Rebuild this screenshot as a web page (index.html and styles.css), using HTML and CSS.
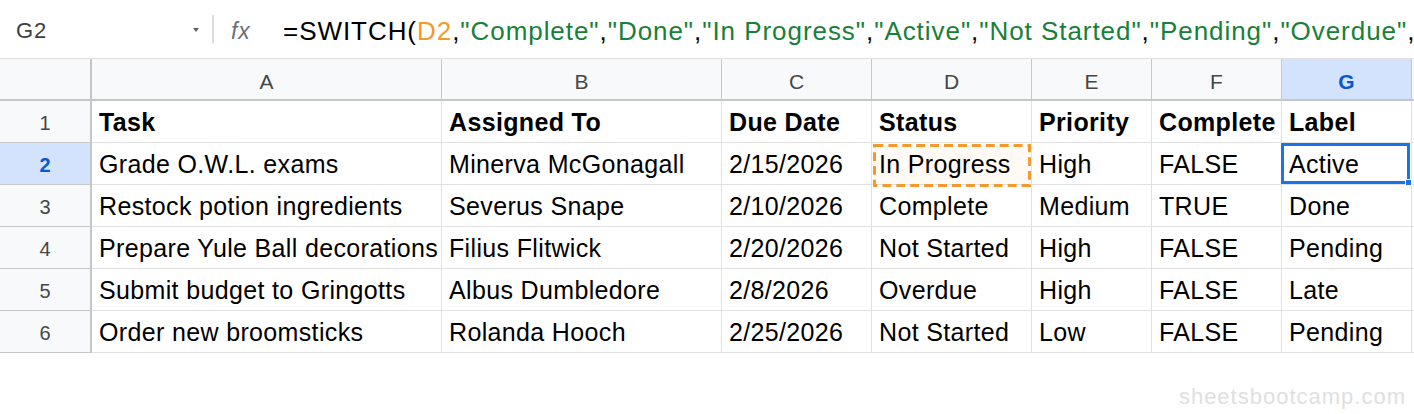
FILE: index.html
```html
<!DOCTYPE html>
<html lang="en">
<head>
<meta charset="utf-8">
<title>Sheet</title>
<link rel="stylesheet" href="styles.css">
</head>
<body>
<div class="app">
  <div class="formula-bar">
    <div class="namebox"><span class="name">G2</span><span class="caret"></span></div>
    <div class="divider"></div>
    <div class="fx">fx</div>
    <div class="formula">=SWITCH(<span class="ref">D2</span>,<span class="str">"Complete"</span>,<span class="str">"Done"</span>,<span class="str">"In Progress"</span>,<span class="str">"Active"</span>,<span class="str">"Not Started"</span>,<span class="str">"Pending"</span>,<span class="str">"Overdue"</span>,</div>
  </div>

  <div class="sheet">
    <div class="corner"></div>
    <div class="colhead">A</div>
    <div class="colhead">B</div>
    <div class="colhead">C</div>
    <div class="colhead">D</div>
    <div class="colhead">E</div>
    <div class="colhead">F</div>
    <div class="colhead active">G</div>
    <div class="colhead last"></div>

    <div class="rowhead">1</div>
    <div class="cell bold">Task</div>
    <div class="cell bold">Assigned To</div>
    <div class="cell bold">Due Date</div>
    <div class="cell bold">Status</div>
    <div class="cell bold">Priority</div>
    <div class="cell bold">Complete</div>
    <div class="cell bold">Label</div>
    <div class="cell"></div>

    <div class="rowhead active">2</div>
    <div class="cell">Grade O.W.L. exams</div>
    <div class="cell">Minerva McGonagall</div>
    <div class="cell">2/15/2026</div>
    <div class="cell copied">In Progress<svg class="dash" viewBox="0 0 160 44" preserveAspectRatio="none"><rect x="1.5" y="1.5" width="156" height="41" fill="none" stroke="#f29a2e" stroke-width="3" stroke-dasharray="9 5"/></svg></div>
    <div class="cell">High</div>
    <div class="cell">FALSE</div>
    <div class="cell selected">Active<span class="handle"></span></div>
    <div class="cell"></div>

    <div class="rowhead">3</div>
    <div class="cell">Restock potion ingredients</div>
    <div class="cell">Severus Snape</div>
    <div class="cell">2/10/2026</div>
    <div class="cell">Complete</div>
    <div class="cell">Medium</div>
    <div class="cell">TRUE</div>
    <div class="cell">Done</div>
    <div class="cell"></div>

    <div class="rowhead">4</div>
    <div class="cell">Prepare Yule Ball decorations</div>
    <div class="cell">Filius Flitwick</div>
    <div class="cell">2/20/2026</div>
    <div class="cell">Not Started</div>
    <div class="cell">High</div>
    <div class="cell">FALSE</div>
    <div class="cell">Pending</div>
    <div class="cell"></div>

    <div class="rowhead">5</div>
    <div class="cell">Submit budget to Gringotts</div>
    <div class="cell">Albus Dumbledore</div>
    <div class="cell">2/8/2026</div>
    <div class="cell">Overdue</div>
    <div class="cell">High</div>
    <div class="cell">FALSE</div>
    <div class="cell">Late</div>
    <div class="cell"></div>

    <div class="rowhead">6</div>
    <div class="cell">Order new broomsticks</div>
    <div class="cell">Rolanda Hooch</div>
    <div class="cell">2/25/2026</div>
    <div class="cell">Not Started</div>
    <div class="cell">Low</div>
    <div class="cell">FALSE</div>
    <div class="cell">Pending</div>
    <div class="cell"></div>
  </div>

  <div class="watermark">sheetsbootcamp.com</div>
</div>
</body>
</html>
```

FILE: styles.css
```css
* { box-sizing: border-box; }

html, body {
  margin: 0;
  padding: 0;
  background: #ffffff;
  overflow: hidden;
}

.app {
  width: 1414px;
  height: 414px;
  font-family: "Liberation Sans", Arial, sans-serif;
  color: #000;
}

/* ---------- formula bar ---------- */
.formula-bar {
  height: 59px;
  display: flex;
  align-items: center;
  padding-top: 4px;
  border-bottom: 1px solid #e1e1e1;
  white-space: nowrap;
  overflow: hidden;
}

.namebox {
  width: 212px;
  flex: none;
  display: flex;
  align-items: center;
  justify-content: space-between;
  padding: 0 13px 0 16px;
}

.name {
  font-size: 22px;
  letter-spacing: 1px;
  color: #3c4043;
}

.caret {
  width: 0;
  height: 0;
  border-left: 3px solid transparent;
  border-right: 3px solid transparent;
  border-top: 4px solid #5f6368;
  margin-top: -3px;
}

.divider {
  width: 2px;
  height: 28px;
  flex: none;
  margin-top: -4px;
  background: #dadce0;
}

.fx {
  width: 52px;
  flex: none;
  margin-left: 17px;
  font-size: 23px;
  font-style: italic;
  letter-spacing: 0.8px;
  color: #6b6f73;
}

.formula {
  font-size: 26px;
  letter-spacing: 0.95px;
  color: #000;
}

.formula .ref { color: #f29a2e; }
.formula .str { color: #188038; }

/* ---------- grid ---------- */
.sheet {
  display: grid;
  grid-template-columns: 92px 350px 280px 150px 160px 120px 130px 130px 1fr;
  grid-auto-rows: 42px;
}

.corner,
.colhead,
.rowhead {
  background: #f8f9fa;
  color: #444746;
  text-align: center;
}

.corner {
  border-right: 2px solid #c4c7c5;
  border-bottom: 2px solid #c4c7c5;
}

.colhead {
  border-right: 1px solid #c7c7c7;
  border-bottom: 2px solid #c4c7c5;
  padding-top: 5px;
  line-height: 35px;
  font-size: 21px;
}

.colhead.last { border-right: none; }

.rowhead {
  border-right: 2px solid #c4c7c5;
  border-bottom: 1px solid #c7c7c7;
  padding-top: 4px;
  line-height: 37px;
  font-size: 20px;
}

.colhead.active,
.rowhead.active {
  background: #d3e3fd;
  color: #0b57d0;
  font-weight: bold;
}

.cell {
  position: relative;
  border-right: 1px solid #e1e1e1;
  border-bottom: 1px solid #e1e1e1;
  padding: 1px 0 0 7px;
  line-height: 40px;
  font-size: 25px;
  letter-spacing: 0.35px;
  white-space: nowrap;
  overflow: hidden;
}

.cell.bold { font-weight: bold; }

.cell.copied {
  overflow: visible;
  background: #fffaf3;
}

.dash {
  position: absolute;
  left: 1px;
  top: 1px;
  width: 159px;
  height: 43px;
  pointer-events: none;
}

.cell.selected {
  overflow: visible;
}

.cell.selected::before {
  content: "";
  position: absolute;
  left: -1px;
  top: 0;
  right: 1px;
  bottom: 0;
  border: 3px solid #1a73e8;
}

.handle {
  position: absolute;
  right: -1px;
  bottom: -2px;
  width: 7px;
  height: 7px;
  background: #1a73e8;
  border: 1px solid #ffffff;
}

/* ---------- watermark ---------- */
.watermark {
  margin-top: 33px;
  padding-right: 8px;
  text-align: right;
  font-size: 22px;
  line-height: 22px;
  letter-spacing: 1px;
  color: #e0e0e0;
}
```
